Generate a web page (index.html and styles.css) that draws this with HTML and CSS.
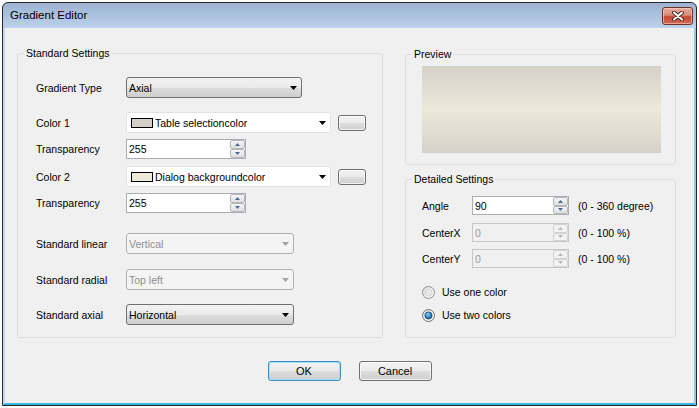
FILE: index.html
```html
<!DOCTYPE html>
<html>
<head>
<meta charset="utf-8">
<title>Gradient Editor</title>
<link rel="stylesheet" href="styles.css">
</head>
<body>
<div class="window">
  <div class="titlebar">
    <span class="title">Gradient Editor</span>
    <button class="close" aria-label="Close">
      <svg width="12" height="10" viewBox="0 0 12 10">
        <path d="M2 1.5 L10 8.5 M10 1.5 L2 8.5" stroke="#4a2a24" stroke-width="4" stroke-linecap="round"/>
        <path d="M2 1.5 L10 8.5 M10 1.5 L2 8.5" stroke="#ffffff" stroke-width="2" stroke-linecap="round"/>
      </svg>
    </button>
  </div>
  <div class="client">
    <div class="main">
      <fieldset class="group std">
        <legend>Standard Settings</legend>
        <div class="row">
          <span class="lbl">Gradient Type</span>
          <div class="combo w176"><span class="val">Axial</span><svg class="arrow" width="7" height="4" viewBox="0 0 7 4"><polygon points="0,0 7,0 3.5,4" fill="#000"/></svg></div>
        </div>
        <div class="row mt-14">
          <span class="lbl">Color 1</span>
          <div class="colorcombo w205"><span class="swatch sw-1"></span><span class="val">Table selectioncolor</span><svg class="arrow" width="7" height="4" viewBox="0 0 7 4"><polygon points="0,0 7,0 3.5,4" fill="#000"/></svg></div>
          <button class="btn colorbtn"></button>
        </div>
        <div class="row short mt-6">
          <span class="lbl">Transparency</span>
          <div class="spin w120"><span class="val">255</span><span class="btns"><span><svg width="5" height="3" viewBox="0 0 5 3"><polygon points="0,3 5,3 2.5,0" fill="#4d6a9a"/></svg></span><span><svg width="5" height="3" viewBox="0 0 5 3"><polygon points="0,0 5,0 2.5,3" fill="#4d6a9a"/></svg></span></span></div>
        </div>
        <div class="row mt-7">
          <span class="lbl">Color 2</span>
          <div class="colorcombo w205"><span class="swatch sw-2"></span><span class="val">Dialog backgroundcolor</span><svg class="arrow" width="7" height="4" viewBox="0 0 7 4"><polygon points="0,0 7,0 3.5,4" fill="#000"/></svg></div>
          <button class="btn colorbtn"></button>
        </div>
        <div class="row short mt-6">
          <span class="lbl">Transparency</span>
          <div class="spin w120"><span class="val">255</span><span class="btns"><span><svg width="5" height="3" viewBox="0 0 5 3"><polygon points="0,3 5,3 2.5,0" fill="#4d6a9a"/></svg></span><span><svg width="5" height="3" viewBox="0 0 5 3"><polygon points="0,0 5,0 2.5,3" fill="#4d6a9a"/></svg></span></span></div>
        </div>
        <div class="row mt-20">
          <span class="lbl">Standard linear</span>
          <div class="combo disabled w168"><span class="val">Vertical</span><svg class="arrow" width="7" height="4" viewBox="0 0 7 4"><polygon points="0,0 7,0 3.5,4" fill="#a3a3a3"/></svg></div>
        </div>
        <div class="row mt-15">
          <span class="lbl">Standard radial</span>
          <div class="combo disabled w168"><span class="val">Top left</span><svg class="arrow" width="7" height="4" viewBox="0 0 7 4"><polygon points="0,0 7,0 3.5,4" fill="#a3a3a3"/></svg></div>
        </div>
        <div class="row mt-14">
          <span class="lbl">Standard axial</span>
          <div class="combo w168"><span class="val">Horizontal</span><svg class="arrow" width="7" height="4" viewBox="0 0 7 4"><polygon points="0,0 7,0 3.5,4" fill="#000"/></svg></div>
        </div>
      </fieldset>

      <div class="rightcol">
        <fieldset class="group preview">
          <legend>Preview</legend>
          <div class="gradient"></div>
        </fieldset>
        <fieldset class="group detail">
          <legend>Detailed Settings</legend>
          <div class="drow">
            <span class="dlbl">Angle</span>
            <div class="spin w97"><span class="val">90</span><span class="btns"><span><svg width="5" height="3" viewBox="0 0 5 3"><polygon points="0,3 5,3 2.5,0" fill="#4d6a9a"/></svg></span><span><svg width="5" height="3" viewBox="0 0 5 3"><polygon points="0,0 5,0 2.5,3" fill="#4d6a9a"/></svg></span></span></div>
            <span class="unit">(0 - 360 degree)</span>
          </div>
          <div class="drow mt-8">
            <span class="dlbl">CenterX</span>
            <div class="spin disabled w97"><span class="val">0</span><span class="btns"><span><svg width="5" height="3" viewBox="0 0 5 3"><polygon points="0,3 5,3 2.5,0" fill="#b8b8b8"/></svg></span><span><svg width="5" height="3" viewBox="0 0 5 3"><polygon points="0,0 5,0 2.5,3" fill="#b8b8b8"/></svg></span></span></div>
            <span class="unit">(0 - 100 %)</span>
          </div>
          <div class="drow mt-7">
            <span class="dlbl">CenterY</span>
            <div class="spin disabled w97"><span class="val">0</span><span class="btns"><span><svg width="5" height="3" viewBox="0 0 5 3"><polygon points="0,3 5,3 2.5,0" fill="#b8b8b8"/></svg></span><span><svg width="5" height="3" viewBox="0 0 5 3"><polygon points="0,0 5,0 2.5,3" fill="#b8b8b8"/></svg></span></span></div>
            <span class="unit">(0 - 100 %)</span>
          </div>
          <div class="radio mt-17">
            <svg width="13" height="13" viewBox="0 0 13 13">
              <defs>
                <linearGradient id="rg" x1="0" y1="0" x2="1" y2="1">
                  <stop offset="0" stop-color="#dcdcdc"/>
                  <stop offset="1" stop-color="#ffffff"/>
                </linearGradient>
              </defs>
              <circle cx="6.5" cy="6.5" r="6" fill="url(#rg)" stroke="#8e8f8f"/>
              <circle cx="6.5" cy="6.5" r="3.5" fill="#e8e8e8" stroke="#cfcfcf" stroke-width="0.8"/>
            </svg>
            <span>Use one color</span>
          </div>
          <div class="radio mt-9">
            <svg width="13" height="13" viewBox="0 0 13 13">
              <defs>
                <radialGradient id="dot" cx="0.4" cy="0.35" r="0.7">
                  <stop offset="0" stop-color="#8fd2ff"/>
                  <stop offset="0.6" stop-color="#2c82c4"/>
                  <stop offset="1" stop-color="#164f86"/>
                </radialGradient>
              </defs>
              <circle cx="6.5" cy="6.5" r="6" fill="url(#rg)" stroke="#6e7071"/>
              <circle cx="6.5" cy="6.5" r="3.6" fill="url(#dot)" stroke="#1d4d7b" stroke-width="0.8"/>
            </svg>
            <span>Use two colors</span>
          </div>
        </fieldset>
      </div>
    </div>
    <div class="buttons">
      <button class="btn push default">OK</button>
      <button class="btn push">Cancel</button>
    </div>
  </div>
</div>
</body>
</html>
```

FILE: styles.css
```css
* { box-sizing: border-box; }

html, body {
  margin: 0;
  padding: 0;
  background: #ffffff;
}

body {
  font-family: "Liberation Sans", Arial, sans-serif;
  font-size: 10.5px;
  color: #000;
}

.window {
  margin: 2px 0 0 2px;
  width: 695px;
  height: 404px;
  border: 1px solid #262626;
  border-radius: 6px 6px 0 0;
  background: linear-gradient(to bottom, #9cb4d2 0px, #bad0ea 24px, #c3d7ee 25px, #c3d7ee 100%);
  display: flex;
  flex-direction: column;
  overflow: hidden;
}

.titlebar {
  height: 25px;
  flex: none;
  display: flex;
  align-items: flex-start;
  justify-content: space-between;
  padding-left: 7px;
}

.title {
  font-size: 11.5px;
  line-height: 25px;
  color: #000;
}

.close {
  margin: 4px 3px 0 0;
  width: 31px;
  height: 18px;
  padding: 0;
  border: 1px solid #6f3127;
  border-radius: 3px;
  background: linear-gradient(to bottom, #e9ad9f 0%, #d98a78 45%, #c5482f 55%, #cf6a54 100%);
  box-shadow: inset 0 0 0 1px rgba(255, 215, 205, 0.55);
  display: flex;
  align-items: center;
  justify-content: center;
}

.client {
  flex: 1;
  background: #f0f0f0;
  background-clip: padding-box;
  border-left: 2px solid #c3d7ee;
  border-right: 2px solid #8acbf0;
  border-bottom: 2px solid #35b5e2;
  display: flex;
  flex-direction: column;
}

.main {
  display: flex;
  align-items: flex-start;
  gap: 22px;
  padding: 19px 0 0 12px;
}

/* group boxes */
.group {
  margin: 0;
  min-width: 0;
  border: 1px solid #d5dfe5;
  border-radius: 3px;
}

.group legend {
  padding: 0 2px;
  height: 12px;
  line-height: 12px;
}

.std {
  width: 366px;
  padding: 18px 0 12px 18px;
}

.std legend { margin-left: -12px; }

.rightcol {
  width: 271px;
  margin-top: 1px;
  display: flex;
  flex-direction: column;
}

.preview {
  padding: 6px 14px 11px 16px;
}

.preview legend,
.detail legend { margin-left: -10px; }

.gradient {
  width: 239px;
  height: 87px;
  background: linear-gradient(to bottom, #d5d1c9 0%, #ece9d9 50%, #d5d1c9 100%);
}

.detail {
  margin-top: 8px;
  padding: 11px 0 15px 16px;
}

/* rows */
.row {
  display: flex;
  align-items: center;
  height: 21px;
}

.row.short { height: 20px; }

.lbl {
  width: 90px;
  flex: none;
}

.mt-6 { margin-top: 6px; }
.mt-7 { margin-top: 7px; }
.mt-8 { margin-top: 8px; }
.mt-9 { margin-top: 9px; }
.mt-14 { margin-top: 14px; }
.mt-15 { margin-top: 15px; }
.mt-17 { margin-top: 17px; }
.mt-20 { margin-top: 20px; }

.w97 { width: 97px; }
.w120 { width: 120px; }
.w168 { width: 168px; }
.w176 { width: 176px; }
.w205 { width: 205px; }

/* dropdowns */
.combo {
  display: flex;
  align-items: center;
  height: 21px;
  padding-left: 2px;
  border: 1px solid #707070;
  border-radius: 3px;
  background: linear-gradient(to bottom, #f2f2f2 0%, #ebebeb 50%, #dddddd 51%, #cfcfcf 100%);
}

.combo.disabled {
  border-color: #adb2b5;
  background: #f4f4f4;
  color: #8f8f8f;
}

.val {
  flex: 1;
  white-space: nowrap;
  overflow: hidden;
}

.arrow {
  flex: none;
  margin-right: 4px;
}

.colorcombo {
  display: flex;
  align-items: center;
  height: 21px;
  padding-left: 4px;
  border: 1px solid #e3e3e3;
  border-radius: 2px;
  background: #ffffff;
}

.colorcombo .arrow { margin-right: 4px; }

.swatch {
  width: 22px;
  height: 10px;
  border: 1px solid #000;
  margin-right: 2px;
  flex: none;
}

.sw-1 { background: #d4d0c8; }
.sw-2 { background: #ece9d8; }

/* buttons */
.btn {
  font: inherit;
  color: #000;
  border: 1px solid #707070;
  border-radius: 3px;
  background: linear-gradient(to bottom, #f2f2f2 0%, #ebebeb 50%, #dddddd 51%, #cfcfcf 100%);
  box-shadow: inset 0 0 0 1px rgba(255, 255, 255, 0.7);
  padding: 0;
}

.colorbtn {
  width: 28px;
  height: 16px;
  margin-left: 7px;
}

.buttons {
  display: flex;
  justify-content: center;
  gap: 18px;
  margin-top: 23px;
}

.push {
  width: 73px;
  height: 20px;
  font-size: 11px;
}

.push.default {
  border-color: #3d8ec4;
  box-shadow: inset 0 0 0 1px #9fe0fb;
  background: linear-gradient(to bottom, #eaf6fd 0%, #d9f0fc 50%, #bee6fd 51%, #a7d9f5 100%);
  background: linear-gradient(to bottom, #f2f2f2 0%, #ebebeb 50%, #dddddd 51%, #cfcfcf 100%);
}

/* spin fields */
.spin {
  display: flex;
  align-items: center;
  height: 20px;
  padding-left: 2px;
  border: 1px solid #abadb3;
  background: #ffffff;
}

.spin .btns {
  align-self: stretch;
  width: 15px;
  flex: none;
  display: flex;
  flex-direction: column;
}

.spin .btns span {
  flex: 1;
  display: flex;
  align-items: center;
  justify-content: center;
  border: 1px solid #b3b8bf;
  border-radius: 2px;
  background: linear-gradient(to bottom, #f6f6f6, #dedede);
}

.spin.disabled {
  border-color: #c6c6c6;
  background: #f0f0f0;
  color: #9a9a9a;
}

.spin.disabled .btns span {
  border-color: #d2d2d2;
  background: #f2f2f2;
}

/* detailed settings */
.drow {
  display: flex;
  align-items: center;
  height: 19px;
}

.drow .spin { height: 19px; }

.dlbl {
  width: 50px;
  flex: none;
}

.unit {
  margin-left: 9px;
  white-space: nowrap;
}

.radio {
  display: flex;
  align-items: center;
  height: 14px;
  gap: 7px;
}

.radio svg { flex: none; }
```
